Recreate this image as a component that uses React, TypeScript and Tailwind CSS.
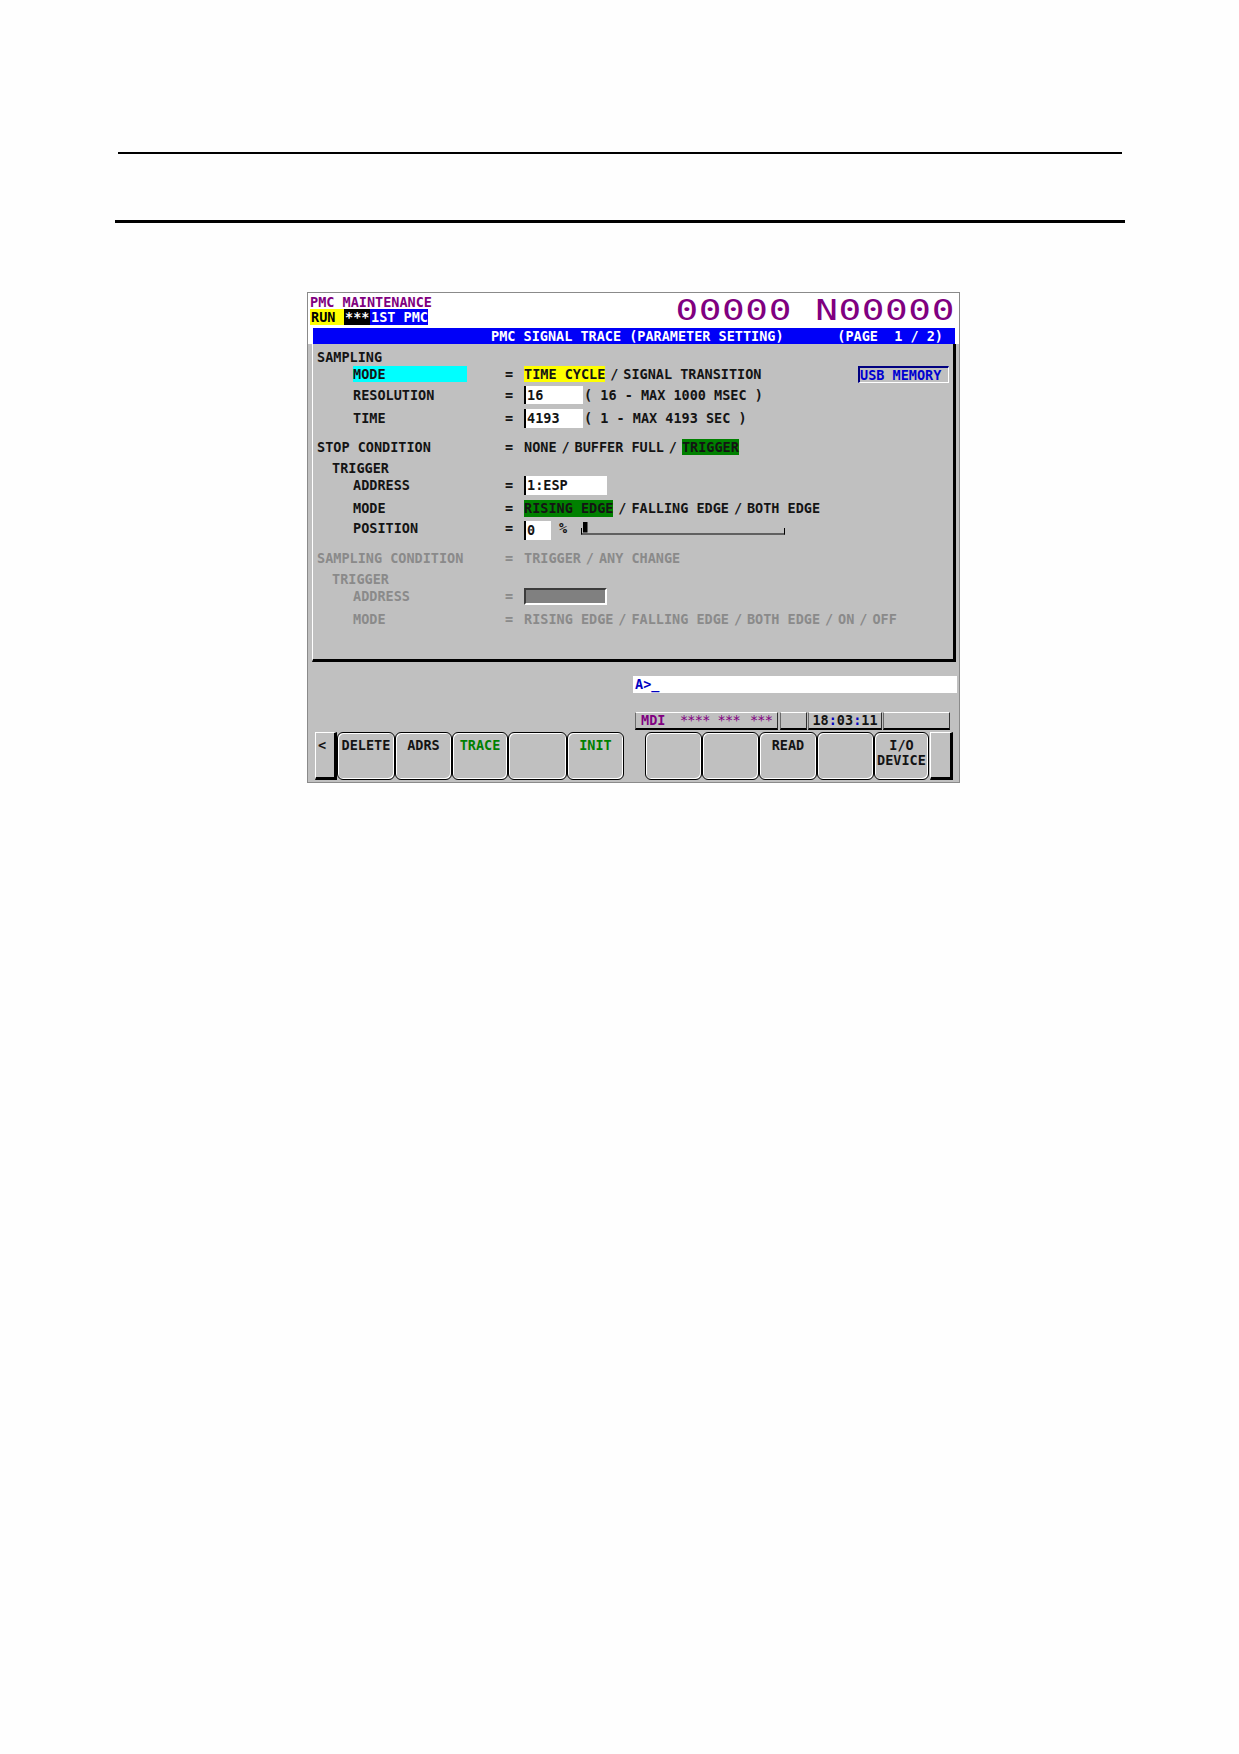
import React from "react"

const mono = "font-['DejaVu_Sans_Mono','Liberation_Mono',monospace] font-bold text-[13.5px] leading-[14px]"

// a "/" between choices takes two character cells
function Sep() {
  return <span className="inline-block w-[18px] text-center">/</span>
}

function Row({
  mt,
  indent,
  label,
  eq = true,
  dim = false,
  children,
}: {
  mt: string
  indent: string
  label?: React.ReactNode
  eq?: boolean
  dim?: boolean
  children?: React.ReactNode
}) {
  return (
    <div className={`flex items-center h-[16px] ${mt} ${dim ? "text-[#8a8a8a]" : "text-[#141414]"}`}>
      <div className={`w-[192px] shrink-0 flex items-center ${indent}`}>{label}</div>
      <div className="w-[19px] shrink-0">{eq ? "=" : ""}</div>
      <div className="flex flex-1 items-center whitespace-pre">{children}</div>
    </div>
  )
}

function Field({ w, h, extra = "", children }: { w: string; h: string; extra?: string; children?: React.ReactNode }) {
  return (
    <span className={`inline-flex items-center ${w} ${h} ${extra} bg-white border-l-2 border-black pl-px`}>
      {children}
    </span>
  )
}

function Key({ w, green, children }: { w: string; green?: boolean; children?: React.ReactNode }) {
  return (
    <div
      className={`${w} h-full shrink-0 rounded-[6px] border border-black shadow-[inset_1px_1px_0_#fff,inset_-1px_-1px_0_#fff] flex flex-col items-center pt-[5px] leading-[15px] ${
        green ? "text-[#008000]" : "text-[#141414]"
      }`}
    >
      {children}
    </div>
  )
}

function EndKey({ w, children }: { w: string; children?: React.ReactNode }) {
  return (
    <div className={`${w} h-full shrink-0 border-t border-l border-white border-r-[3px] border-b-[3px] border-r-black border-b-black pl-[2px] pt-[5px] leading-[15px] text-[#141414]`}>
      {children}
    </div>
  )
}

function StatusBox({ w, ml, extra = "", children }: { w: string; ml: string; extra?: string; children?: React.ReactNode }) {
  return (
    <div className={`${w} ${ml} ${extra} h-full border-t border-t-white border-l border-l-[#6a6a6a] border-r border-r-[#303030] border-b-2 border-b-black`}>
      {children}
    </div>
  )
}

function Gauge() {
  return (
    <svg width="205" height="13" viewBox="0 0 205 13" className="ml-[14px]">
      <line x1="0.5" y1="6" x2="0.5" y2="12.5" stroke="#000" strokeWidth="1" />
      <line x1="0" y1="12" x2="204" y2="12" stroke="#000" strokeWidth="1" />
      <line x1="203.5" y1="6" x2="203.5" y2="12.5" stroke="#000" strokeWidth="1" />
      <rect x="2" y="0" width="4.5" height="10.5" fill="#000" />
    </svg>
  )
}

export default function App() {
  return (
    <div className="w-[1239px] h-[1754px] bg-[#fefefe] overflow-hidden">
      <div className="mt-[152px] ml-[118px] w-[1004px] h-[2px] bg-black" />
      <div className="mt-[66px] ml-[115px] w-[1010px] h-[3px] bg-black" />

      {/* CNC screen */}
      <div className={`mt-[69px] ml-[307px] w-[653px] h-[491px] border border-[#8a8a8a] bg-[#c0c0c0] flex flex-col ${mono}`}>
        <div className="bg-white">
          <div className="h-[35px] flex items-start">
            <div className="pt-[2px] pl-[2px]">
              <div className="h-[14px] text-[#800080]">PMC MAINTENANCE</div>
              <div className="h-[16px] flex items-center leading-[16px]">
                <span className="w-[34px] h-full bg-[#ffff00] text-black pl-[1px]">RUN</span>
                <span className="w-[26px] h-full bg-black text-white pl-[1px]">***</span>
                <span className="w-[58px] h-full bg-[#0000f8] text-white pl-[1px]">1ST PMC</span>
              </div>
            </div>
            <div className="ml-auto mr-[4px] mt-[5px] h-[24px] overflow-visible">
              <span className="inline-block origin-right scale-x-[1.3] text-[29px] leading-[24px] font-normal tracking-[0.45px] text-[#800080] whitespace-pre">
                00000 N00000
              </span>
            </div>
          </div>
          <div className="ml-[5px] w-[642px] h-[16px] bg-[#0000f8] text-white leading-[17px] flex whitespace-pre">
            <span className="ml-[178px]">PMC SIGNAL TRACE (PARAMETER SETTING)</span>
            <span className="ml-auto mr-[12px]">(PAGE  1 / 2)</span>
          </div>
        </div>

        {/* parameter panel */}
        <div className="ml-[4px] w-[644px] h-[318px] shrink-0 border-l border-l-white border-r-[3px] border-r-black border-b-[3px] border-b-black pt-[5px]">
          <Row mt="mt-0" indent="pl-[4px]" label="SAMPLING" eq={false} />
          <Row
            mt="mt-[1px]"
            indent="pl-[40px]"
            label={<span className="w-[114px] h-[16px] bg-[#00ffff] flex items-center">MODE</span>}
          >
            <span className="h-[16px] bg-[#ffff00] flex items-center">TIME CYCLE</span>
            <Sep />
            <span>SIGNAL TRANSITION</span>
            <span className="ml-auto mr-[4px] w-[91px] h-[17px] border-t-2 border-l-2 border-[#000080] border-r border-b border-r-white border-b-white text-[#0000d0] flex items-center">
              USB MEMORY
            </span>
          </Row>
          <Row mt="mt-[5px]" indent="pl-[40px]" label="RESOLUTION">
            <Field w="w-[59px]" h="h-[18px]">16</Field>
            <span className="ml-px">( 16 - MAX 1000 MSEC )</span>
          </Row>
          <Row mt="mt-[7px]" indent="pl-[40px]" label="TIME">
            <Field w="w-[59px]" h="h-[19px]">4193</Field>
            <span className="ml-px">( 1 - MAX 4193 SEC )</span>
          </Row>
          <Row mt="mt-[13px]" indent="pl-[4px]" label="STOP CONDITION">
            <span>NONE</span>
            <Sep />
            <span>BUFFER FULL</span>
            <Sep />
            <span className="h-[16px] bg-[#008000] flex items-center">TRIGGER</span>
          </Row>
          <Row mt="mt-[5px]" indent="pl-[19px]" label="TRIGGER" eq={false} />
          <Row mt="mt-[1px]" indent="pl-[40px]" label="ADDRESS">
            <Field w="w-[83px]" h="h-[19px]">1:ESP</Field>
          </Row>
          <Row mt="mt-[7px]" indent="pl-[40px]" label="MODE">
            <span className="h-[17px] bg-[#008000] flex items-center">RISING EDGE</span>
            <Sep />
            <span>FALLING EDGE</span>
            <Sep />
            <span>BOTH EDGE</span>
          </Row>
          <Row mt="mt-[4px]" indent="pl-[40px]" label="POSITION">
            <Field w="w-[27px]" h="h-[19px]" extra="mt-[4px]">0</Field>
            <span className="ml-[8px]">%</span>
            <Gauge />
          </Row>
          <Row mt="mt-[14px]" indent="pl-[4px]" label="SAMPLING CONDITION" dim>
            <span>TRIGGER</span>
            <Sep />
            <span>ANY CHANGE</span>
          </Row>
          <Row mt="mt-[5px]" indent="pl-[19px]" label="TRIGGER" eq={false} dim />
          <Row mt="mt-[1px]" indent="pl-[40px]" label="ADDRESS" dim>
            <span className="w-[83px] h-[17px] bg-[#808080] border-2 border-t-[#3c3c3c] border-l-[#3c3c3c] border-r-white border-b-white" />
          </Row>
          <Row mt="mt-[7px]" indent="pl-[40px]" label="MODE" dim>
            <span>RISING EDGE</span>
            <Sep />
            <span>FALLING EDGE</span>
            <Sep />
            <span>BOTH EDGE</span>
            <Sep />
            <span>ON</span>
            <Sep />
            <span>OFF</span>
          </Row>
        </div>

        {/* key-in line */}
        <div className="mt-[14px] ml-[325px] w-[324px] h-[17px] bg-white text-[#0000c0] leading-[17px] pl-[2px] whitespace-pre">
          A&gt;_
        </div>

        {/* status line */}
        <div className="mt-[19px] h-[18px] flex leading-[15px]">
          <StatusBox w="w-[143px]" ml="ml-[327px]" extra="text-[#800080] pl-[5px] flex">
            <span>MDI</span>
            <span className="ml-[14.5px] font-normal tracking-[-0.7px]">****</span>
            <span className="ml-[8px] font-normal tracking-[-0.7px]">***</span>
            <span className="ml-[10px] font-normal tracking-[-0.7px]">***</span>
          </StatusBox>
          <StatusBox w="w-[27px]" ml="ml-[2px]" />
          <StatusBox w="w-[74px]" ml="ml-px" extra="text-[#141414] flex justify-center">
            <span>18</span>
            <span className="text-[#0000c0]">:</span>
            <span>03</span>
            <span className="text-[#0000c0]">:</span>
            <span>11</span>
          </StatusBox>
          <StatusBox w="w-[67px]" ml="ml-px" />
        </div>

        {/* soft keys */}
        <div className="mt-[2px] h-[48px] flex">
          <div className="ml-[7px] flex h-full">
            <EndKey w="w-[22px]">&lt;</EndKey>
            <Key w="w-[58px]">DELETE</Key>
            <Key w="w-[57px]">ADRS</Key>
            <Key w="w-[56px]" green>TRACE</Key>
            <Key w="w-[59px]" />
            <Key w="w-[57px]" green>INIT</Key>
          </div>
          <div className="ml-[21px] flex h-full">
            <Key w="w-[57px]" />
            <Key w="w-[57px]" />
            <Key w="w-[58px]">READ</Key>
            <Key w="w-[57px]" />
            <Key w="w-[55px]">
              <span>I/O</span>
              <span>DEVICE</span>
            </Key>
            <div className="ml-px">
              <EndKey w="w-[23px]" />
            </div>
          </div>
        </div>
      </div>
    </div>
  )
}
